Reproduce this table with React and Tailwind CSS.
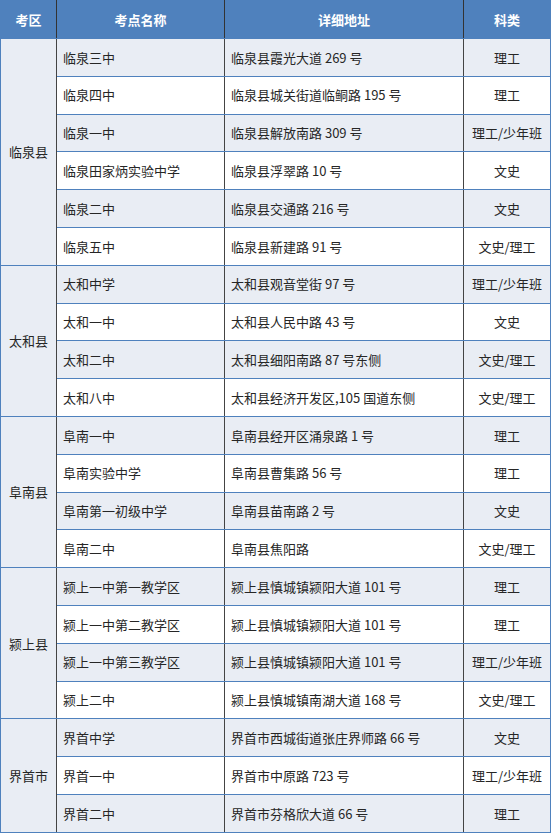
import React from "react";

const groups = [
  { d: "临泉县", rows: [
    ["临泉三中", "临泉县霞光大道 269 号", "理工"],
    ["临泉四中", "临泉县城关街道临鲖路 195 号", "理工"],
    ["临泉一中", "临泉县解放南路 309 号", "理工/少年班"],
    ["临泉田家炳实验中学", "临泉县浮翠路 10 号", "文史"],
    ["临泉二中", "临泉县交通路 216 号", "文史"],
    ["临泉五中", "临泉县新建路 91 号", "文史/理工"],
  ]},
  { d: "太和县", rows: [
    ["太和中学", "太和县观音堂街 97 号", "理工/少年班"],
    ["太和一中", "太和县人民中路 43 号", "文史"],
    ["太和二中", "太和县细阳南路 87 号东侧", "文史/理工"],
    ["太和八中", "太和县经济开发区,105 国道东侧", "文史/理工"],
  ]},
  { d: "阜南县", rows: [
    ["阜南一中", "阜南县经开区涌泉路 1 号", "理工"],
    ["阜南实验中学", "阜南县曹集路 56 号", "理工"],
    ["阜南第一初级中学", "阜南县苗南路 2 号", "文史"],
    ["阜南二中", "阜南县焦阳路", "文史/理工"],
  ]},
  { d: "颍上县", rows: [
    ["颍上一中第一教学区", "颍上县慎城镇颍阳大道 101 号", "理工"],
    ["颍上一中第二教学区", "颍上县慎城镇颍阳大道 101 号", "理工"],
    ["颍上一中第三教学区", "颍上县慎城镇颍阳大道 101 号", "理工/少年班"],
    ["颍上二中", "颍上县慎城镇南湖大道 168 号", "文史/理工"],
  ]},
  { d: "界首市", rows: [
    ["界首中学", "界首市西城街道张庄界师路 66 号", "文史"],
    ["界首一中", "界首市中原路 723 号", "理工/少年班"],
    ["界首二中", "界首市芬格欣大道 66 号", "理工"],
  ]},
];

export default function App() {
  let idx = 0;
  const rows = [];
  groups.forEach((g) => {
    g.rows.forEach((r, i) => {
      idx += 1;
      const shaded = idx % 2 === 1;
      const bg = shaded ? "bg-[#e9edf4]" : "bg-white";
      rows.push(
        <tr key={idx} className="h-[37.8px]">
          {i === 0 && (
            <td
              rowSpan={g.rows.length}
              className="bg-[#e9edf4] text-center border-y border-y-[#4f81bd] border-l border-l-[#4f81bd] border-r border-r-[#444] border-r-dotted p-0"
            >
              {g.d}
            </td>
          )}
          <td className={`${bg} pl-[6px] border-y border-y-[#4f81bd] border-r border-r-[#444] border-r-dotted p-0`}>
            {r[0]}
          </td>
          <td className={`${bg} pl-[6px] border-y border-y-[#4f81bd] border-r border-r-[#444] border-r-dotted p-0`}>
            {r[1]}
          </td>
          <td className={`${bg} text-center border-y border-y-[#4f81bd] border-r border-r-[#4f81bd] p-0`}>
            {r[2]}
          </td>
        </tr>
      );
    });
  });

  return (
    <div className="w-[552px] h-[834px] bg-white" style={{ fontFamily: '"Noto Sans CJK SC", "Noto Sans", sans-serif' }}>
      <table className="border-collapse w-[550px] text-[13px] text-[#262626] table-fixed">
        <colgroup>
          <col className="w-[56px]" />
          <col className="w-[168px]" />
          <col className="w-[239px]" />
          <col className="w-[87px]" />
        </colgroup>
        <thead>
          <tr className="h-[38px] bg-[#4f81bd] text-white font-bold">
            <th className="border border-[#4f81bd] border-r-[#333] border-r-dotted p-0 font-bold">考区</th>
            <th className="border border-[#4f81bd] border-r-[#333] border-r-dotted p-0 font-bold">考点名称</th>
            <th className="border border-[#4f81bd] border-r-[#333] border-r-dotted p-0 font-bold">详细地址</th>
            <th className="border border-[#4f81bd] p-0 font-bold">科类</th>
          </tr>
        </thead>
        <tbody>{rows}</tbody>
      </table>
    </div>
  );
}
